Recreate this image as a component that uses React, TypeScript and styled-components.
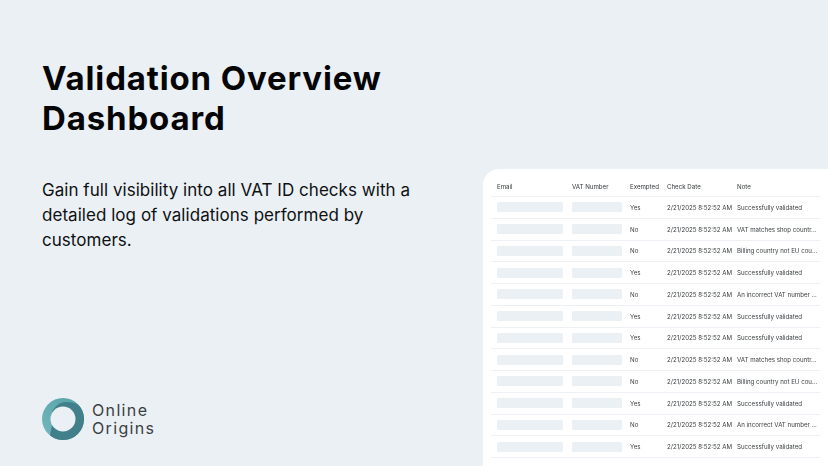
import React from 'react';
import styled, { createGlobalStyle } from 'styled-components';

const GlobalStyle = createGlobalStyle`
  html, body {
    margin: 0;
    padding: 0;
    background: #ebf0f5;
  }
  #root {
    width: 828px;
    height: 466px;
  }
`;

const Page = styled.div`
  width: 828px;
  height: 466px;
  display: grid;
  grid-template-columns: 483px 345px;
  background: #ebf0f5;
  overflow: hidden;
  font-family: Inter, 'Liberation Sans', sans-serif;
`;

const Intro = styled.div`
  display: flex;
  flex-direction: column;
  padding: 58px 0 0 42px;
`;

const Title = styled.h1`
  margin: 0;
  font-size: 33px;
  line-height: 40px;
  font-weight: 700;
  letter-spacing: 0.85px;
  color: #050505;
`;

const Lead = styled.p`
  margin: 40px 0 0;
  width: 380px;
  font-size: 17px;
  line-height: 25px;
  font-weight: 400;
  letter-spacing: 0.04px;
  color: #0e1012;
`;

const Brand = styled.div`
  display: flex;
  align-items: center;
  gap: 8px;
  margin-top: auto;
  margin-bottom: 26px;
`;

const BrandName = styled.div`
  font-size: 16px;
  line-height: 18.5px;
  letter-spacing: 1.35px;
  color: #3a3f43;
`;

const Panel = styled.div`
  margin-top: 169px;
  padding: 7px 8px 0;
  background: #fff;
  border-top-left-radius: 16px;
`;

const Row = styled.div<{ $head?: boolean }>`
  display: grid;
  grid-template-columns: 75px 58px 37px 70px 1fr;
  align-items: center;
  height: ${(p) => (p.$head ? '21px' : '21.75px')};
  padding-left: 6px;
  border-bottom: 1px solid #edf1f5;
  box-sizing: border-box;
  font-size: 6.15px;
  color: ${(p) => (p.$head ? '#33373a' : '#3c4043')};
  white-space: nowrap;
  filter: blur(0.25px);
`;

const Blank = styled.div<{ $wide?: boolean }>`
  width: ${(p) => (p.$wide ? '66px' : '50px')};
  height: 10px;
  background: #ebf0f5;
  border-radius: 1.5px;
`;

const Mark = () => (
  <svg width="42" height="42" viewBox="0 0 42 42" aria-hidden="true">
    <defs>
      <linearGradient id="ring" x1="0" y1="1" x2="1" y2="0">
        <stop offset="0" stopColor="#74b8bc" />
        <stop offset="1" stopColor="#55a0a6" />
      </linearGradient>
    </defs>
    <circle cx="21" cy="21" r="21" fill="url(#ring)" />
    <path d="M37.5 8A21 21 0 0 1 8 37.5L10 27L10 14C13 8 18 4 24 4C30 4 34.5 5 37.5 8z" fill="#417f8a" />
    <circle cx="21" cy="21" r="12.5" fill="#ebf0f5" />
  </svg>
);

const notes = [
  'Successfully validated',
  'VAT matches shop countr...',
  'Billing country not EU cou...',
  'Successfully validated',
  'An incorrect VAT number ...',
  'Successfully validated',
  'Successfully validated',
  'VAT matches shop countr...',
  'Billing country not EU cou...',
  'Successfully validated',
  'An incorrect VAT number ...',
  'Successfully validated',
];

const exempted = ['Yes', 'No', 'No', 'Yes', 'No', 'Yes', 'Yes', 'No', 'No', 'Yes', 'No', 'Yes'];

const App: React.FC = () => {
  return (
    <Page>
      <GlobalStyle />
      <Intro>
        <Title>
          Validation Overview
          <br />
          Dashboard
        </Title>
        <Lead>Gain full visibility into all VAT ID checks with a detailed log of validations performed by customers.</Lead>
        <Brand>
          <Mark />
          <BrandName>
            Online
            <br />
            Origins
          </BrandName>
        </Brand>
      </Intro>
      <Panel>
        <Row $head>
          <span>Email</span>
          <span>VAT Number</span>
          <span>Exempted</span>
          <span>Check Date</span>
          <span>Note</span>
        </Row>
        {notes.map((note, i) => (
          <Row key={i}>
            <Blank $wide />
            <Blank />
            <span>{exempted[i]}</span>
            <span>2/21/2025 8:52:52 AM</span>
            <span>{note}</span>
          </Row>
        ))}
      </Panel>
    </Page>
  );
};

export default App;
